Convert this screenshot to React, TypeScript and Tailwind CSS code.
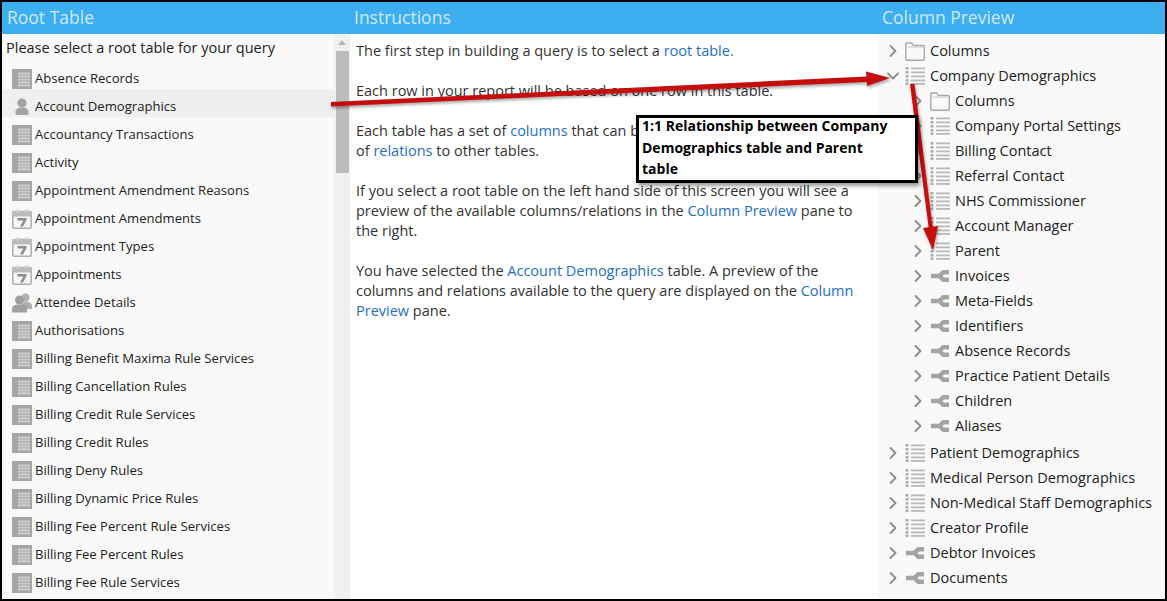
import React from 'react';
import { ChevronRight, ChevronDown } from 'lucide-react';

const rootTables = [
    { name: "Absence Records", icon: "grid" },
    { name: "Account Demographics", icon: "person", selected: true },
    { name: "Accountancy Transactions", icon: "grid" },
    { name: "Activity", icon: "grid" },
    { name: "Appointment Amendment Reasons", icon: "grid" },
    { name: "Appointment Amendments", icon: "cal" },
    { name: "Appointment Types", icon: "cal" },
    { name: "Appointments", icon: "cal" },
    { name: "Attendee Details", icon: "people" },
    { name: "Authorisations", icon: "grid" },
    { name: "Billing Benefit Maxima Rule Services", icon: "grid" },
    { name: "Billing Cancellation Rules", icon: "grid" },
    { name: "Billing Credit Rule Services", icon: "grid" },
    { name: "Billing Credit Rules", icon: "grid" },
    { name: "Billing Deny Rules", icon: "grid" },
    { name: "Billing Dynamic Price Rules", icon: "grid" },
    { name: "Billing Fee Percent Rule Services", icon: "grid" },
    { name: "Billing Fee Percent Rules", icon: "grid" },
    { name: "Billing Fee Rule Services", icon: "grid" },
];

const childRows = [
    { name: "Columns", icon: "folder" },
    { name: "Company Portal Settings", icon: "list" },
    { name: "Billing Contact", icon: "list" },
    { name: "Referral Contact", icon: "list" },
    { name: "NHS Commissioner", icon: "list" },
    { name: "Account Manager", icon: "list" },
    { name: "Parent", icon: "list" },
    { name: "Invoices", icon: "rel" },
    { name: "Meta-Fields", icon: "rel" },
    { name: "Identifiers", icon: "rel" },
    { name: "Absence Records", icon: "rel" },
    { name: "Practice Patient Details", icon: "rel" },
    { name: "Children", icon: "rel" },
    { name: "Aliases", icon: "rel" },
];

const lowerRows = [
    { name: "Patient Demographics", icon: "list" },
    { name: "Medical Person Demographics", icon: "list" },
    { name: "Non-Medical Staff Demographics", icon: "list" },
    { name: "Creator Profile", icon: "list" },
    { name: "Debtor Invoices", icon: "rel" },
    { name: "Documents", icon: "rel" },
];

function TableIcon({ kind }: { kind: string }) {
    if (kind === "person") {
        return (
            <svg width="20" height="20" viewBox="0 0 20 20" className="shrink-0">
                <circle cx="10" cy="6" r="4.600" fill="#a3a3a3" />
                <path d="M3.500 18v-3c0-3 3-4.400 6.500-4.400s6.500 1.400 6.500 4.400v3z" fill="#a3a3a3" />
            </svg>
        );
    }
    if (kind === "people") {
        return (
            <svg width="20" height="20" viewBox="0 0 20 20" className="shrink-0">
                <circle cx="13.500" cy="4.500" r="4" fill="#b0b0b0" />
                <path d="M10 13c0-3 1.500-4.500 3.500-4.500s6.500 1 6.500 4.500v3h-10z" fill="#b0b0b0" />
                <circle cx="7.500" cy="7" r="4.500" fill="#a0a0a0" />
                <path d="M0 19.500v-4c0-2.500 3-4 7.500-4s7.500 1.500 7.500 4v4z" fill="#a0a0a0" />
            </svg>
        );
    }
    if (kind === "cal") {
        return (
            <svg width="20" height="20" viewBox="0 0 20 20" className="shrink-0">
                <rect x="0.800" y="2.500" width="18.400" height="16.700" rx="1.500" fill="#f6f6f6" stroke="#b0b0b0" strokeWidth="1.600" />
                <rect x="0" y="2" width="20" height="5.500" fill="#bbbbbb" />
                <rect x="4" y="0.500" width="2.200" height="3" fill="#cfcfcf" />
                <rect x="13.800" y="0.500" width="2.200" height="3" fill="#cfcfcf" />
                <path d="M5.500 9h9v2l-3.500 6.500h-3l3.300-6h-5.800z" fill="#8e8e8e" />
            </svg>
        );
    }
    const cells: number[] = [6.5, 9.5, 12.5, 15.5];
    return (
        <svg width="20" height="20" viewBox="0 0 20 20" className="shrink-0">
            <rect width="20" height="20" fill="#a6a6a6" />
            {cells.map((x) =>
                [3.5, 6.5, 9.5, 12.5, 15.5].map((y) => (
                    <rect key={`${x}-${y}`} x={x} y={y} width="2" height="2" fill="#e2e2e2" />
                ))
            )}
        </svg>
    );
}

function TreeIcon({ kind }: { kind: string }) {
    if (kind === "folder") {
        return (
            <svg width="20" height="20" viewBox="0 0 20 20" className="shrink-0">
                <path d="M0.800 18.300v-15.300q0-1 1-1h5l1.500 2.500h10q1 0 1 1v13q0 .700-1 .700h-16.500q-1 0-1-.900z" fill="none" stroke="#a8a8a8" strokeWidth="1.400" />
                <path d="M1 6.200h18" stroke="#cfcfcf" strokeWidth="1" />
            </svg>
        );
    }
    if (kind === "rel") {
        return (
            <svg width="20" height="20" viewBox="0 0 20 20" className="shrink-0">
                <path d="M1 7.800h7.500l4-3.800h6.500v4.500h-5l-1.500 1.500 1.500 1.500h5v4.500h-6.500l-4-3.800h-7.500z" fill="#a4a4a4" />
            </svg>
        );
    }
    return (
        <svg width="20" height="20" viewBox="0 0 20 20" className="shrink-0">
            {[1, 5, 9, 13, 16.5].map((y) => (
                <g key={y}>
                    <rect x="0.500" y={y} width="3" height="2.600" fill="#adadad" />
                    <rect x="6" y={y + 0.5} width="14" height="1.800" fill="#b8b8b8" />
                </g>
            ))}
        </svg>
    );
}

function TreeRow({ name, icon, open }: { name: string; icon: string; open?: boolean }) {
    const chevron = "w-[20px] h-[20px] text-[#8c8c8c] ml-[6px] mr-[2px] shrink-0";
    return (
        <div className="flex h-[25px] items-center">
            {open ? (
                <ChevronDown className={chevron} strokeWidth={2.200} />
            ) : (
                <ChevronRight className={chevron} strokeWidth={2.200} />
            )}
            <TreeIcon kind={icon} />
            <span className="ml-[5px] whitespace-nowrap text-[14.500px] text-[#222]">{name}</span>
        </div>
    );
}

function Link({ children }: { children: React.ReactNode }) {
    return <span className="text-[#1f6fc4]">{children}</span>;
}

export default function App() {
    return (
        <div className="relative w-[1167px] h-[601px] overflow-hidden border-2 border-black bg-white font-['Open_Sans',sans-serif]">
            <div className="flex h-[32px] bg-[#3daef0] text-[17.500px] text-[#cde9fb]">
                <div className="w-[348px] pl-[5px] leading-[31px]">Root Table</div>
                <div className="w-[527px] pl-[4px] leading-[31px]">Instructions</div>
                <div className="pl-[5px] leading-[31px]">Column Preview</div>
            </div>

            <div className="flex h-[565px]">
                <div className="flex w-[348px] shrink-0 bg-[#f9f9f9]">
                    <div className="w-[332px]">
                        <div className="h-[27px] pl-[4px] pt-[3px] text-[14.500px] leading-[21px] text-[#222]">
                            Please select a root table for your query
                        </div>
                        {rootTables.map((t) => (
                            <div
                                key={t.name}
                                className={`flex h-[28px] items-center pl-[10px] pt-[7px] ${t.selected ? "bg-[#efefef]" : ""}`}
                            >
                                <TableIcon kind={t.icon} />
                                <span className="ml-[3px] whitespace-nowrap text-[13.100px] text-[#222]">{t.name}</span>
                            </div>
                        ))}
                    </div>
                    <div className="flex w-[16px] flex-col items-center bg-[#f0f0f0]">
                        <div className="mt-[6px] h-0 w-0 border-x-[4px] border-b-[5px] border-x-transparent border-b-[#b5b5b5]" />
                        <div className="mt-[6px] h-[122px] w-[13px] bg-[#bcbcbc]" />
                    </div>
                </div>

                <div className="w-[527px] shrink-0 pl-[6px] pt-[7px] text-[14.500px] leading-[20px] text-[#333]">
                    <p>The first step in building a query is to select a <Link>root table.</Link></p>
                    <p className="mt-[20px]">Each row in your report will be based on one row in this table.</p>
                    <p className="mt-[20px] whitespace-nowrap">
                        Each table has a set of <Link>columns</Link> that can be included in your report and a set
                        <br />
                        of <Link>relations</Link> to other tables.
                    </p>
                    <p className="mt-[20px] w-[510px]">
                        If you select a root table on the left hand side of this screen you will see a preview of the available columns/relations in the <Link>Column Preview</Link> pane to the right.
                    </p>
                    <p className="mt-[20px] w-[510px]">
                        You have selected the <Link>Account Demographics</Link> table. A preview of the columns and relations available to the query are displayed on the <Link>Column Preview</Link> pane.
                    </p>
                </div>

                <div className="flex-1 bg-[#f9f9f9] pt-[4px]">
                    <TreeRow name="Columns" icon="folder" />
                    <TreeRow name="Company Demographics" icon="list" open />
                    <div className="pl-[25px]">
                        {childRows.map((r) => (
                            <TreeRow key={r.name} name={r.name} icon={r.icon} />
                        ))}
                    </div>
                    <div className="mt-[2px]">
                        {lowerRows.map((r) => (
                            <TreeRow key={r.name} name={r.name} icon={r.icon} />
                        ))}
                    </div>
                </div>
            </div>

            {/* red annotation arrows */}
            <svg className="absolute left-[-2px] top-[-2px] pointer-events-none" width="1167" height="601">
                <defs>
                    <filter id="arrowShadow" x="-5%" y="-20%" width="110%" height="140%">
                        <feDropShadow dx="1" dy="2" stdDeviation="1.500" floodColor="#000" floodOpacity="0.350" />
                    </filter>
                </defs>
                <g filter="url(#arrowShadow)" fill="#c40a0a">
                    <path d="M331 102 L867 76.500 L867 82 L331 106.500 Z" />
                    <path d="M866 71.500 L890 78 L867 86 Z" />
                    <path d="M910 84 L914.500 84 L933 230 L929 230 Z" />
                    <path d="M923 228 L938 226 L933 250 Z" />
                </g>
            </svg>

            <div className="absolute left-[634px] top-[113px] h-[68px] w-[282px] border-[3px] border-black bg-white pl-[3px] pr-[24px] text-[14px] font-bold leading-[21.500px] text-black shadow-[2px_3px_4px_rgba(0,0,0,0.4)]">
                <div className="-mt-[3px]">1:1 Relationship between Company Demographics table and Parent table</div>
            </div>
        </div>
    );
}
